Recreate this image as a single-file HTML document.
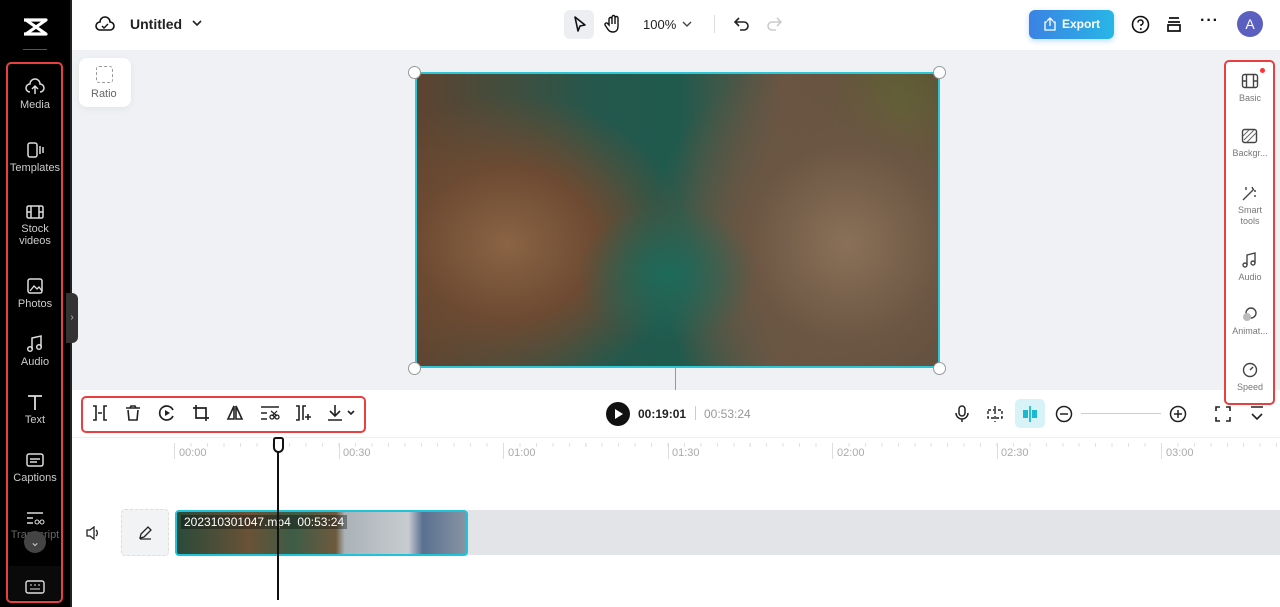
<!DOCTYPE html>
<html><head><meta charset="utf-8"><style>
*{box-sizing:border-box;margin:0;padding:0}
body{width:1280px;height:607px;overflow:hidden;font-family:"Liberation Sans",sans-serif;background:#fff;position:relative}
.abs{position:absolute}
.side{left:0;top:0;width:70px;height:607px;background:#000}
.si{position:absolute;left:0;width:70px;text-align:center;color:#ccc;font-size:11px;line-height:12px}
.si svg{display:block;margin:0 auto 3px}
.ri{position:absolute;left:1226px;width:48px;text-align:center;color:#777;font-size:9px;line-height:11px}
.ri svg{display:block;margin:0 auto 4px}
.tb svg{position:absolute;top:404px}
.tick{position:absolute;top:447px;font-size:11px;color:#aaa}
</style></head><body>
<div class="abs side"></div>
<div class="abs" style="left:70px;top:0;width:2px;height:607px;background:#222"></div>
<svg class="abs" style="left:22px;top:17px" width="26" height="20" viewBox="0 0 26 20"><path d="M2 3h22L4 17h20M2 17h22L4 3" fill="none" stroke="#fff" stroke-width="3.2" stroke-linejoin="round"/></svg>
<div class="abs" style="left:23px;top:49px;width:24px;height:1px;background:#555"></div>
<div class="si" style="top:78px"><svg width="20" height="18" viewBox="0 0 20 18"><path d="M5 14a4 4 0 0 1 0-8 5 5 0 0 1 10 0 4 4 0 0 1 0 8M10 16V9M7 11l3-3 3 3" fill="none" stroke="#ddd" stroke-width="1.5"/></svg>Media</div>
<div class="si" style="top:141px"><svg width="20" height="18" viewBox="0 0 20 18"><rect x="3" y="2" width="9" height="14" rx="2" fill="none" stroke="#ddd" stroke-width="1.5"/><path d="M15 5v8M18 6v6" stroke="#ddd" stroke-width="1.5"/></svg>Templates</div>
<div class="si" style="top:204px"><svg width="20" height="16" viewBox="0 0 20 16"><rect x="2" y="2" width="16" height="12" rx="1.5" fill="none" stroke="#ddd" stroke-width="1.5"/><path d="M6 2v12M14 2v12M2 8h4M14 8h4" stroke="#ddd" stroke-width="1.5"/></svg>Stock<br>videos</div>
<div class="si" style="top:277px"><svg width="20" height="18" viewBox="0 0 20 18"><rect x="3" y="2" width="14" height="14" rx="2" fill="none" stroke="#ddd" stroke-width="1.5"/><path d="M5 14l4-5 3 3 2-2 3 4" fill="none" stroke="#ddd" stroke-width="1.3"/></svg>Photos</div>
<div class="si" style="top:335px"><svg width="20" height="18" viewBox="0 0 20 18"><path d="M7 14V3l9-2v11" fill="none" stroke="#ddd" stroke-width="1.5"/><circle cx="5" cy="14" r="2.3" fill="none" stroke="#ddd" stroke-width="1.5"/><circle cx="14" cy="12" r="2.3" fill="none" stroke="#ddd" stroke-width="1.5"/></svg>Audio</div>
<div class="si" style="top:393px"><svg width="20" height="18" viewBox="0 0 20 18"><path d="M3 3h14M10 3v14" stroke="#ddd" stroke-width="1.8"/></svg>Text</div>
<div class="si" style="top:451px"><svg width="20" height="18" viewBox="0 0 20 18"><rect x="2" y="3" width="16" height="12" rx="2" fill="none" stroke="#ddd" stroke-width="1.5"/><path d="M5 8h10M5 11h7" stroke="#ddd" stroke-width="1.5"/></svg>Captions</div>
<div class="si" style="top:510px;color:#666"><svg width="20" height="16" viewBox="0 0 20 16"><path d="M2 3h16M2 8h6M2 13h6" stroke="#ddd" stroke-width="1.5"/><circle cx="12" cy="12" r="2" fill="none" stroke="#ddd"/><circle cx="17" cy="12" r="2" fill="none" stroke="#ddd"/></svg>Transcript</div>
<div class="abs" style="left:24px;top:531px;width:22px;height:22px;border-radius:50%;background:#444;color:#ccc;font-size:12px;text-align:center;line-height:22px">⌄</div>
<div class="abs" style="left:8px;top:566px;width:53px;height:34px;background:#0a0a0a"></div>
<svg class="abs" style="left:25px;top:580px" width="20" height="14"><rect x="1" y="1" width="18" height="12" rx="2" fill="none" stroke="#ddd" stroke-width="1.4"/><path d="M5 9h10M5 5h2M9 5h2M13 5h2" stroke="#ddd"/></svg>
<div class="abs" style="left:6px;top:62px;width:57px;height:541px;border:2.5px solid #e84040;border-radius:5px"></div>
<!-- top bar -->
<svg class="abs" style="left:95px;top:15px" width="20" height="18" viewBox="0 0 20 18"><path d="M5 15a4 4 0 0 1 0-8 5 5 0 0 1 10 0 4 4 0 0 1 0 8z" fill="none" stroke="#111" stroke-width="1.6"/><path d="M7 11l2 2 4-4" fill="none" stroke="#111" stroke-width="1.4"/></svg>
<div class="abs" style="left:130px;top:16px;font-size:14px;font-weight:bold;color:#222">Untitled</div>
<svg class="abs" style="left:191px;top:19px" width="12" height="8"><path d="M2 2l4 4 4-4" fill="none" stroke="#222" stroke-width="1.6"/></svg>
<div class="abs" style="left:564px;top:10px;width:30px;height:29px;background:#eceef2;border-radius:6px"></div>
<svg class="abs" style="left:572px;top:15px" width="16" height="18"><path d="M3 2l10 8-5 1-2 5z" fill="none" stroke="#111" stroke-width="1.6" stroke-linejoin="round"/></svg>
<svg class="abs" style="left:603px;top:14px" width="20" height="20"><path d="M6 11V5a1.5 1.5 0 0 1 3 0v5V3a1.5 1.5 0 0 1 3 0v7V4a1.5 1.5 0 0 1 3 0v8c0 4-2 6-5 6s-4-1-6-4l-2-3a1.5 1.5 0 0 1 3-1z" fill="none" stroke="#111" stroke-width="1.4"/></svg>
<div class="abs" style="left:643px;top:17px;font-size:13px;color:#222">100%</div>
<svg class="abs" style="left:681px;top:20px" width="12" height="8"><path d="M2 2l4 4 4-4" fill="none" stroke="#444" stroke-width="1.4"/></svg>
<div class="abs" style="left:714px;top:15px;width:1px;height:18px;background:#ddd"></div>
<svg class="abs" style="left:732px;top:15px" width="18" height="18"><path d="M4 7h8a4 4 0 0 1 0 8H8M7 3L3 7l4 4" fill="none" stroke="#222" stroke-width="1.6"/></svg>
<svg class="abs" style="left:766px;top:15px" width="18" height="18"><path d="M14 7H6a4 4 0 0 0 0 8h4M11 3l4 4-4 4" fill="none" stroke="#ccc" stroke-width="1.6"/></svg>
<div class="abs" style="left:1029px;top:10px;width:85px;height:29px;border-radius:6px;background:linear-gradient(90deg,#3b82e4,#28b6e6);color:#fff;font-size:12px;font-weight:bold;line-height:29px;padding-left:33px;box-shadow:0 2px 6px rgba(40,140,230,.3)">Export</div>
<svg class="abs" style="left:1043px;top:17px" width="14" height="14"><path d="M4 5H2v8h10V5h-2M7 9V1M4 4l3-3 3 3" fill="none" stroke="#fff" stroke-width="1.3"/></svg>
<svg class="abs" style="left:1131px;top:15px" width="19" height="19"><circle cx="9.5" cy="9.5" r="8" fill="none" stroke="#111" stroke-width="1.6"/><path d="M7 7.5a2.5 2.5 0 1 1 3 2.4V11" fill="none" stroke="#111" stroke-width="1.5"/><circle cx="9.8" cy="14" r="1" fill="#111"/></svg>
<svg class="abs" style="left:1166px;top:15px" width="16" height="18"><path d="M3 3h10M2 7h12M2 10h12v6H2z" fill="none" stroke="#111" stroke-width="1.7"/></svg>
<div class="abs" style="left:1200px;top:12px;font-size:16px;color:#111;font-weight:bold;letter-spacing:1px">···</div>
<div class="abs" style="left:1237px;top:11px;width:26px;height:26px;border-radius:50%;background:#5a5fc0;color:#fff;font-size:14px;text-align:center;line-height:26px">A</div>
<!-- canvas -->
<div class="abs" style="left:72px;top:50px;width:1208px;height:340px;background:#eff1f4"></div>
<div class="abs" style="left:66px;top:293px;width:12px;height:50px;background:#333;border-radius:0 6px 6px 0;color:#bbb;font-size:10px;line-height:50px;text-align:center">›</div>
<div class="abs" style="left:79px;top:58px;width:52px;height:49px;background:#fff;border-radius:8px;box-shadow:0 2px 8px rgba(0,0,0,.06)"></div>
<div class="abs" style="left:96px;top:66px;width:17px;height:17px;border:1.5px dashed #999;border-radius:3px"></div>
<div class="abs" style="left:91px;top:88px;font-size:11px;color:#666">Ratio</div>
<div class="abs" style="left:415px;top:72px;width:525px;height:296px;border:2px solid #2bc7d6;overflow:hidden;background:
radial-gradient(ellipse 90px 70px at 250px 200px,#1d6a5a 0%,transparent 100%),
radial-gradient(ellipse 180px 150px at 90px 170px,#8a6444 0%,#6d4a32 50%,transparent 100%),
radial-gradient(ellipse 200px 200px at 430px 170px,#8a7058 0%,#6b5643 50%,transparent 100%),
radial-gradient(ellipse 70px 90px at 480px 40px,#5a6a2a 0%,transparent 100%),
linear-gradient(90deg,#5e4330 0%,#24584c 35%,#1f5a4d 50%,#6a5442 70%,#5d4b3a 100%)"></div>
<div class="abs" style="left:408px;top:66px;width:13px;height:13px;border-radius:50%;background:#fff;border:1px solid #999"></div>
<div class="abs" style="left:933px;top:66px;width:13px;height:13px;border-radius:50%;background:#fff;border:1px solid #999"></div>
<div class="abs" style="left:408px;top:362px;width:13px;height:13px;border-radius:50%;background:#fff;border:1px solid #999"></div>
<div class="abs" style="left:933px;top:362px;width:13px;height:13px;border-radius:50%;background:#fff;border:1px solid #999"></div>
<!-- right panel -->
<div class="abs" style="left:1224px;top:60px;width:51px;height:345px;background:#fff;border:2.5px solid #e84040;border-radius:5px"></div>
<div class="abs" style="left:1260px;top:68px;width:5px;height:5px;border-radius:50%;background:#f33"></div>
<div class="ri" style="top:73px"><svg width="18" height="16"><rect x="1.5" y="1.5" width="15" height="13" rx="2" fill="none" stroke="#444" stroke-width="1.4"/><path d="M5.5 1.5v13M12.5 1.5v13M1.5 8h4M12.5 8h4" stroke="#444" stroke-width="1.4"/></svg>Basic</div>
<div class="ri" style="top:128px"><svg width="18" height="16"><rect x="1.5" y="1.5" width="14" height="13" rx="2" fill="none" stroke="#444" stroke-width="1.4"/><path d="M3 12l10-10M6 14l9-9M2 8l6-6" stroke="#666"/></svg>Backgr...</div>
<div class="ri" style="top:185px"><svg width="18" height="16"><path d="M2 15l11-11M11 2l1 2M15 6l-2 0M14 10v2M5 2v3" stroke="#444" stroke-width="1.4"/></svg>Smart<br>tools</div>
<div class="ri" style="top:252px"><svg width="18" height="16"><path d="M6 13V3l8-2v10" fill="none" stroke="#444" stroke-width="1.4"/><circle cx="4" cy="13" r="2" fill="none" stroke="#444" stroke-width="1.4"/><circle cx="12" cy="11" r="2" fill="none" stroke="#444" stroke-width="1.4"/></svg>Audio</div>
<div class="ri" style="top:306px"><svg width="18" height="16"><circle cx="10" cy="7" r="5" fill="none" stroke="#444" stroke-width="1.4"/><circle cx="6" cy="11" r="4" fill="#bbb"/></svg>Animat...</div>
<div class="ri" style="top:362px"><svg width="18" height="16"><circle cx="9" cy="8" r="6.5" fill="none" stroke="#444" stroke-width="1.4"/><path d="M9 8l3-3" stroke="#444" stroke-width="1.5"/></svg>Speed</div>
<div class="abs" style="left:675px;top:368px;width:6px;height:22px;border-left:1.5px solid #999"></div>
<!-- toolbar -->
<div class="abs" style="left:81px;top:396px;width:285px;height:37px;border:2.5px solid #e84040;border-radius:5px"></div>
<div class="tb">
<svg class="abs" style="left:91px" width="18" height="18"><path d="M2 2h3v14H2M16 2h-3v14h3M7 9h4" fill="none" stroke="#222" stroke-width="1.6"/></svg>
<svg class="abs" style="left:124px" width="18" height="18"><path d="M2 4h14M6 4l1-2h4l1 2M4 6l1 10h8l1-10" fill="none" stroke="#222" stroke-width="1.6"/></svg>
<svg class="abs" style="left:158px" width="18" height="18"><path d="M15 6a7 7 0 1 0 0 6" fill="none" stroke="#222" stroke-width="1.7"/><path d="M7 6l5 3-5 3z" fill="#222"/></svg>
<svg class="abs" style="left:192px" width="18" height="18"><path d="M4 1v13h13M1 4h13v13" fill="none" stroke="#222" stroke-width="1.7"/></svg>
<svg class="abs" style="left:226px" width="18" height="18"><path d="M8 2L2 15h6zM10 2l6 13h-6z" fill="none" stroke="#222" stroke-width="1.6"/></svg>
<svg class="abs" style="left:260px" width="20" height="18"><path d="M1 3h18M1 9h6M1 15h6" stroke="#222" stroke-width="1.5"/><circle cx="12" cy="13" r="2" fill="none" stroke="#222" stroke-width="1.3"/><circle cx="17" cy="13" r="2" fill="none" stroke="#222" stroke-width="1.3"/><path d="M11 7l6 5M17 7l-5 5" stroke="#222" stroke-width="1.2"/></svg>
<svg class="abs" style="left:294px" width="18" height="18"><path d="M2 2h3v14H2M12 2h-3v14M14 10v6M11 13h6" fill="none" stroke="#222" stroke-width="1.6"/></svg>
<svg class="abs" style="left:326px" width="30" height="18"><path d="M9 1v11M4 7l5 5 5-5M2 16h14M22 7l3 3 3-3" fill="none" stroke="#222" stroke-width="1.6"/></svg>
</div>
<div class="abs" style="left:606px;top:402px;width:24px;height:24px;border-radius:50%;background:#111"></div>
<svg class="abs" style="left:614px;top:409px" width="10" height="10"><path d="M1 0l8 5-8 5z" fill="#fff"/></svg>
<div class="abs" style="left:638px;top:407px;font-size:12px;font-weight:bold;color:#222">00:19:01</div>
<div class="abs" style="left:695px;top:406px;width:1px;height:14px;background:#ccc"></div>
<div class="abs" style="left:704px;top:407px;font-size:12px;color:#999">00:53:24</div>
<svg class="abs" style="left:955px;top:405px" width="14" height="18"><rect x="4" y="1" width="6" height="10" rx="3" fill="none" stroke="#222" stroke-width="1.5"/><path d="M1 8a6 6 0 0 0 12 0M7 14v3" fill="none" stroke="#222" stroke-width="1.5"/></svg>
<svg class="abs" style="left:986px;top:405px" width="18" height="18"><path d="M9 1v16M2 5h14v8H2z" fill="none" stroke="#222" stroke-width="1.4" stroke-dasharray="3 2"/></svg>
<div class="abs" style="left:1015px;top:399px;width:30px;height:29px;background:#d8f3f7;border-radius:5px"></div>
<svg class="abs" style="left:1021px;top:405px" width="18" height="18"><path d="M9 1v16" stroke="#1bb9d0" stroke-width="1.8"/><rect x="2" y="5" width="5" height="8" fill="#1bb9d0"/><rect x="11" y="5" width="5" height="8" fill="#1bb9d0"/></svg>
<svg class="abs" style="left:1055px;top:405px" width="18" height="18"><circle cx="9" cy="9" r="7.5" fill="none" stroke="#222" stroke-width="1.5"/><path d="M5 9h8" stroke="#222" stroke-width="1.5"/></svg>
<div class="abs" style="left:1081px;top:413px;width:80px;height:1px;background:#ccc"></div>
<svg class="abs" style="left:1169px;top:405px" width="18" height="18"><circle cx="9" cy="9" r="7.5" fill="none" stroke="#222" stroke-width="1.5"/><path d="M5 9h8M9 5v8" stroke="#222" stroke-width="1.5"/></svg>
<svg class="abs" style="left:1215px;top:406px" width="16" height="16"><path d="M1 5V1h4M11 1h4v4M15 11v4h-4M5 15H1v-4" fill="none" stroke="#222" stroke-width="1.6"/></svg>
<svg class="abs" style="left:1249px;top:406px" width="16" height="16"><path d="M2 1h12M3 8l5 5 5-5" fill="none" stroke="#222" stroke-width="1.6"/></svg>
<!-- timeline -->
<div class="abs" style="left:72px;top:437px;width:1208px;height:1px;background:#eee"></div>
<div class="abs" style="left:174px;top:443px;width:1106px;height:4px;background:repeating-linear-gradient(90deg,#e2e2e2 0 1px,transparent 1px 16.45px)"></div>
<div class="abs" style="left:174px;top:443px;width:1px;height:16px;background:#ddd"></div>
<div class="abs" style="left:339px;top:443px;width:1px;height:16px;background:#ddd"></div>
<div class="abs" style="left:503px;top:443px;width:1px;height:16px;background:#ddd"></div>
<div class="abs" style="left:668px;top:443px;width:1px;height:16px;background:#ddd"></div>
<div class="abs" style="left:832px;top:443px;width:1px;height:16px;background:#ddd"></div>
<div class="abs" style="left:997px;top:443px;width:1px;height:16px;background:#ddd"></div>
<div class="abs" style="left:1161px;top:443px;width:1px;height:16px;background:#ddd"></div>
<div class="tick" style="left:179px">00:00</div><div class="tick" style="left:343px">00:30</div><div class="tick" style="left:508px">01:00</div><div class="tick" style="left:672px">01:30</div><div class="tick" style="left:837px">02:00</div><div class="tick" style="left:1001px">02:30</div><div class="tick" style="left:1166px">03:00</div>
<svg class="abs" style="left:85px;top:526px" width="16" height="14"><path d="M2 4h3l4-3v12l-4-3H2z" fill="none" stroke="#222" stroke-width="1.3"/><path d="M11 4a4 4 0 0 1 0 6" fill="none" stroke="#222" stroke-width="1.3"/></svg>
<div class="abs" style="left:121px;top:509px;width:48px;height:47px;background:#f2f3f5;border:1px dashed #ddd;border-radius:4px"></div>
<svg class="abs" style="left:138px;top:526px" width="14" height="14"><path d="M2 12l1-4 7-7 3 3-7 7zM2 13h11" fill="none" stroke="#222" stroke-width="1.3"/></svg>
<div class="abs" style="left:467px;top:510px;width:813px;height:45px;background:#e2e4e8"></div>
<div class="abs" style="left:175px;top:510px;width:293px;height:46px;border:2px solid #1fc4d8;border-radius:4px;overflow:hidden;background:linear-gradient(90deg,#2a4a3a 0%,#6a5236 25%,#3d5c46 40%,#6e5a3e 55%,#aab2b8 58%,#c8ccd0 80%,#5a7090 85%,#8894a4 100%)">
<div style="position:absolute;left:4px;top:3px;font-size:12px;color:#fff;background:rgba(0,0,0,.35);padding:0 3px">202310301047.mp4&nbsp; 00:53:24</div></div>
<div class="abs" style="left:277px;top:437px;width:2px;height:163px;background:#111"></div>
<div class="abs" style="left:273px;top:437px;width:11px;height:16px;background:#fff;border:2px solid #111;border-radius:3px 3px 6px 6px"></div>
</body></html>
